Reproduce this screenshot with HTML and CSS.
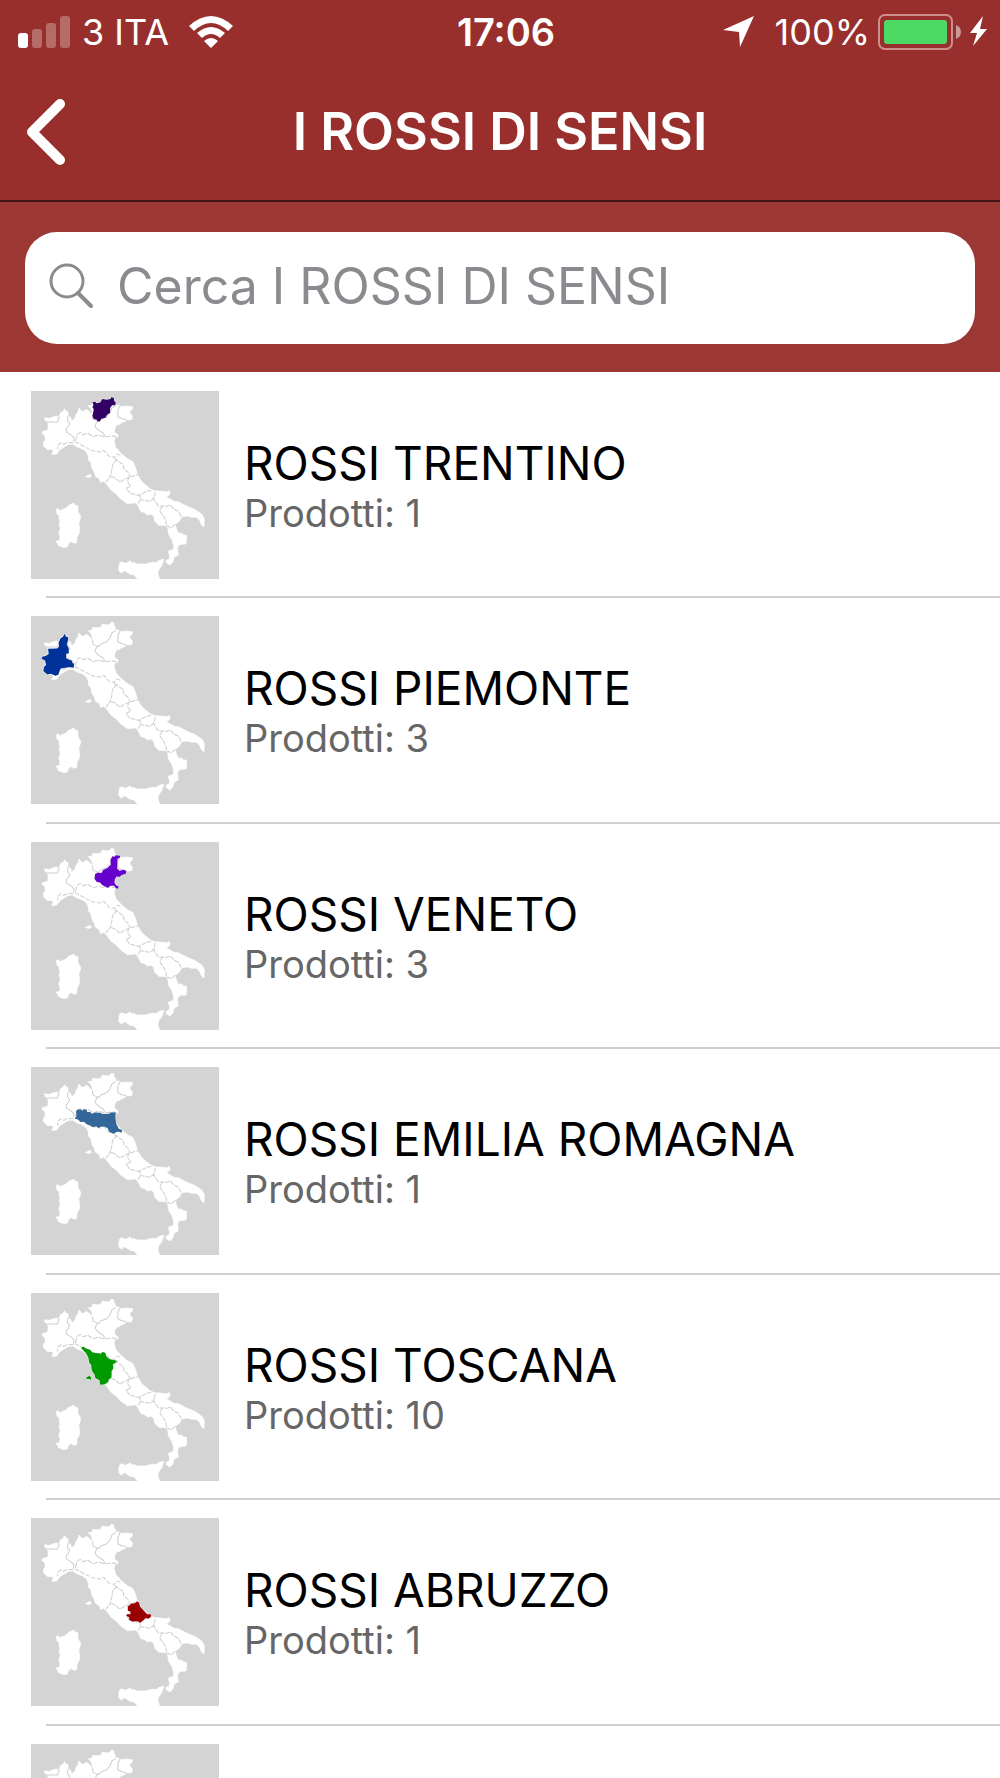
FILE: index.html
```html
<!DOCTYPE html>
<html lang="it">
<head>
    <meta charset="UTF-8">
    <meta name="viewport" content="width=device-width, initial-scale=1.0">
    <title>I ROSSI DI SENSI</title>
    <link rel="stylesheet" href="styles.css">
</head>
<body>
    <!-- Shared map of Italy -->
    <svg class="defs" aria-hidden="true">
        <symbol id="italia" viewBox="33 33 563 563">
            <path fill="#d4d4d4" d="M33 33h563v563H33z"/>
            <g fill="#fff" stroke="#fff" stroke-width="2" stroke-linejoin="round">
                <path d="M73 113L88 115L97 111L110 108L116 112L122 97L128 95L134 86L138 94L144 94L144 107L152 112L155 123L165 114L167 104L173 97L177 84L184 93L191 94L198 88L206 92L213 101L217 98L213 86L204 77L217 75L217 67L228 68L240 68L247 57L262 60L271 57L273 52L281 53L282 62L287 70L285 74L300 76L304 80L318 78L337 80L336 88L329 92L330 101L337 107L335 118L325 120L318 118L315 124L303 129L297 134L290 134L284 145L283 156L294 165L293 171L284 172L282 184L287 202L303 220L322 236L338 244L346 262L352 284L365 305L390 326L404 332L425 333L440 335L446 331L450 336L446 345L438 350L463 364L475 365L500 378L524 388L545 402L552 415L551 440L543 433L538 420L528 411L514 411L500 407L484 410L478 422L465 432L468 445L473 458L485 459L490 464L499 465L499 478L497 491L478 493L472 502L474 524L462 530L458 545L449 554L437 546L439 539L447 536L448 526L444 513L460 507L460 495L455 478L445 462L442 440L436 436L416 435L404 424L400 407L390 401L384 405L371 396L363 395L352 374L344 368L322 371L300 355L290 343L273 330L258 310L250 303L241 307L238 296L226 288L223 277L216 265L212 247L205 240L205 228L198 214L186 206L170 200L158 192L145 193L125 205L118 210L110 222L95 223L100 213L95 208L82 208L70 197L71 185L76 180L74 166L66 160L68 154L78 152L84 148L84 130L77 124Z"/>
                <path d="M158 370L163 370L165 376L173 376L174 395L182 408L179 422L176 427L178 442L178 458L171 470L170 487L162 489L153 484L145 490L142 500L130 502L115 496L112 487L108 485L111 481L118 482L120 470L116 458L121 445L117 433L120 425L117 415L118 407L111 402L109 388L113 385L120 391L137 384L145 376Z"/>
                <path d="M296 562L298 549L304 544L315 549L325 545L329 541L334 547L346 548L352 551L375 551L395 546L410 546L416 540L431 537L425 555L415 570L413 580L418 596H352L342 584L330 582L315 572L308 573L305 579L296 571Z"/>
                <path d="M196 289L203 286L210 282L214 289L205 292Z"/>
            </g>
            <g fill="none" stroke="#cdcdcd" stroke-width="3" stroke-linejoin="round">
                <path d="M75 126L112 126L118 110M144 107L142 122L149 130L144 140L138 146L140 157L154 165L162 174L160 184"/>
                <path stroke-dasharray="15 4" d="M160 187L139 188L132 193L122 188L114 195L112 208M166 182L171 163L180 157L189 164L202 159L219 170L236 165L252 170L283 168L293 170"/>
                <path stroke-dasharray="13 5" d="M165 185L188 197L214 211L240 216L251 211L260 220L266 228L282 232L291 222L302 226"/>
                <path d="M217 103L219 118L236 124L229 126L225 140L236 151L248 158L255 169M236 124L243 116L260 110L270 98L275 84L286 76M300 76L293 92L293 110L305 116L318 118"/>
                <path stroke-dasharray="14 3" d="M291 237L277 253L275 270L270 290L257 306M282 235L310 254L311 266L323 276L330 290M273 289L284 293L299 306L314 297L330 290L353 284M326 290L322 305L332 318L318 324L328 338L357 346L360 341M393 330L380 333L359 344L361 358L352 373M359 358L389 363L401 355L406 332M399 351L405 364L414 377L441 378L450 374L462 387L474 393L483 409M427 378L418 391L428 405L437 421L439 436L453 443L465 432"/>
            </g>
        </symbol>
    </svg>

    <header class="header">
        <div class="status">
            <div class="status-left">
                <svg width="52" height="32" viewBox="0 0 52 32" aria-hidden="true">
                    <rect x="0" y="17" width="10" height="15" rx="3" fill="#fff"/>
                    <g fill="#b56b68">
                        <rect x="14" y="13" width="10" height="19" rx="3"/>
                        <rect x="28" y="7" width="10" height="25" rx="3"/>
                        <rect x="42" y="0" width="10" height="32" rx="3"/>
                    </g>
                </svg>
                <span>3 ITA</span>
                <svg class="wifi" width="44" height="32" viewBox="0 0 44 32" aria-hidden="true">
                    <path fill="#fff" d="M0 10Q22-10 44 10L39 15Q22-1 5 15ZM8 17Q22 5 36 17L31 22Q22 14 13 22ZM15 25Q22 19 29 25L22 32Z"/>
                </svg>
            </div>
            <strong class="time">17:06</strong>
            <div class="status-right">
                <svg class="location" width="32" height="32" viewBox="0 0 32 32" aria-hidden="true">
                    <path fill="#fff" d="M31 0L17 31L16 16L0 14Z"/>
                </svg>
                <span>100%</span>
                <svg width="110" height="36" viewBox="0 0 110 36" aria-hidden="true">
                    <rect x="1" y="1" width="73" height="34" rx="6" fill="none" stroke="#cb8f8d" stroke-width="2"/>
                    <rect x="6" y="6" width="63" height="24" rx="3" fill="#4cd964"/>
                    <path fill="#cb9997" d="M78 11Q83 13 83 18Q83 23 78 25Z"/>
                    <path fill="#fff" d="M105 2L92 19H99L95 32L109 15H102Z"/>
                </svg>
            </div>
        </div>
        <div class="navbar">
            <button class="back" type="button" aria-label="Indietro">
                <svg width="40" height="68" viewBox="0 0 40 68" aria-hidden="true">
                    <path d="M34 6L6 34L34 62" fill="none" stroke="#fff" stroke-width="10" stroke-linecap="round" stroke-linejoin="round"/>
                </svg>
            </button>
            <h1>I ROSSI DI SENSI</h1>
        </div>
    </header>

    <form class="search">
        <label class="search-box">
            <svg width="46" height="46" viewBox="0 0 46 46" aria-hidden="true">
                <circle cx="18" cy="18" r="16" fill="none" stroke="#8a8a8f" stroke-width="3"/>
                <path d="M29 30L42 43" stroke="#8a8a8f" stroke-width="4" stroke-linecap="round"/>
            </svg>
            <input type="search" name="q" placeholder="Cerca I ROSSI DI SENSI" aria-label="Cerca I ROSSI DI SENSI">
        </label>
    </form>

    <!-- Regions -->
    <ul class="list">
        <li>
            <a href="#trentino">
                <svg class="thumb" viewBox="33 33 563 563" aria-hidden="true">
                    <use href="#italia" x="33" y="33" width="563" height="563"/>
                    <path fill="#330066" d="M217 66L226 66L230 70L241 67L246 57L260 59L271 57L273 52L281 53L282 62L287 68L285 76L276 76L270 84L270 98L261 104L256 113L244 116L239 124L233 124L230 119L221 117L217 108L221 88L217 82L220 74Z"/>
                </svg>
                <div class="info">
                    <h2>ROSSI TRENTINO</h2>
                    <p>Prodotti: 1</p>
                </div>
            </a>
        </li>
        <li>
            <a href="#piemonte">
                <svg class="thumb" viewBox="33 33 563 563" aria-hidden="true">
                    <use href="#italia" x="33" y="33" width="563" height="563"/>
                    <path fill="#003399" d="M134 86L138 95L144 96L144 105L140 118L146 130L146 145L138 146L138 159L147 164L155 166L157 174L162 176L161 188L150 186L122 190L119 197L115 209L106 212L92 206L82 208L70 198L72 185L78 180L75 166L65 161L67 155L78 152L86 147L84 131L111 130L117 124L116 112L122 99L128 96Z"/>
                </svg>
                <div class="info">
                    <h2>ROSSI PIEMONTE</h2>
                    <p>Prodotti: 3</p>
                </div>
            </a>
        </li>
        <li>
            <a href="#veneto">
                <svg class="thumb" viewBox="33 33 563 563" aria-hidden="true">
                    <use href="#italia" x="33" y="33" width="563" height="563"/>
                    <path fill="#6600cc" d="M277 76L284 77L286 73L299 74L300 79L292 84L291 112L298 119L311 116L318 120L317 128L306 131L298 137L289 136L284 145L283 156L290 164L295 165L294 172L288 172L282 164L271 164L263 170L246 162L240 154L230 153L223 143L225 129L234 125L244 126L249 117L262 111L272 101L271 86Z"/>
                </svg>
                <div class="info">
                    <h2>ROSSI VENETO</h2>
                    <p>Prodotti: 3</p>
                </div>
            </a>
        </li>
        <li>
            <a href="#emilia-romagna">
                <svg class="thumb" viewBox="33 33 563 563" aria-hidden="true">
                    <use href="#italia" x="33" y="33" width="563" height="563"/>
                    <path fill="#336699" d="M168 164L174 160L184 160L187 165L191 159L199 161L202 168L210 168L216 173L226 169L241 170L247 174L268 173L270 169L287 169L285 180L288 203L296 218L306 222L304 230L294 226L286 229L280 233L268 228L262 216L252 211L242 212L236 216L229 211L217 213L210 208L199 204L192 197L181 198L174 190L164 187L169 181Z"/>
                </svg>
                <div class="info">
                    <h2>ROSSI EMILIA ROMAGNA</h2>
                    <p>Prodotti: 1</p>
                </div>
            </a>
        </li>
        <li>
            <a href="#toscana">
                <svg class="thumb" viewBox="33 33 563 563" aria-hidden="true">
                    <use href="#italia" x="33" y="33" width="563" height="563"/>
                    <path fill="#009900" d="M183 198L189 193L198 199L210 203L217 211L243 215L246 210L255 212L259 223L267 231L292 237L278 247L280 258L274 267L274 286L266 291L265 298L254 306L240 308L238 294L226 288L223 277L215 265L213 248L207 242L205 228L199 215ZM195 289L208 281L214 287L212 292Z"/>
                </svg>
                <div class="info">
                    <h2>ROSSI TOSCANA</h2>
                    <p>Prodotti: 10</p>
                </div>
            </a>
        </li>
        <li>
            <a href="#abruzzo">
                <svg class="thumb" viewBox="33 33 563 563" aria-hidden="true">
                    <use href="#italia" x="33" y="33" width="563" height="563"/>
                    <path fill="#990000" d="M323 299L333 290L344 288L349 283L356 286L360 299L375 315L381 321L391 321L393 327L386 334L375 333L368 341L360 347L353 342L335 343L326 337L328 331L318 326L321 321L331 321L331 313L323 311Z"/>
                </svg>
                <div class="info">
                    <h2>ROSSI ABRUZZO</h2>
                    <p>Prodotti: 1</p>
                </div>
            </a>
        </li>
        <li>
            <a href="#altre" aria-label="Altre regioni">
                <svg class="thumb" viewBox="33 33 563 563" aria-hidden="true">
                    <use href="#italia" x="33" y="33" width="563" height="563"/>
                </svg>
            </a>
        </li>
    </ul>
</body>
</html>
```
FILE: styles.css
```css
* {
    box-sizing: border-box;
}
html {
    scrollbar-width: none;
}
body {
    font-family: Inter, "Liberation Sans", sans-serif;
    margin: 0;
    background-color: #ffffff;
    color: #000000;
}
h1, h2, p, ul {
    margin: 0;
    padding: 0;
}
svg {
    display: block;
    flex-shrink: 0;
}
.defs {
    position: absolute;
    width: 0;
    height: 0;
}
/* Header */
.header {
    background-color: #982f2c;
    border-bottom: 2px solid #431414;
    color: #ffffff;
}
.status {
    display: grid;
    grid-template-columns: 1fr auto 1fr;
    align-items: center;
    height: 64px;
    padding: 0 12px 0 18px;
    font-size: 36px;
    line-height: 44px;
}
.status-left, .status-right {
    display: flex;
    align-items: center;
    gap: 12px;
}
.status-right {
    justify-content: flex-end;
    gap: 8px;
}
.wifi {
    margin-left: 8px;
}
.location {
    margin-right: 12px;
}
.time {
    padding-left: 6px;
    font-size: 38px;
    font-weight: 600;
}
.navbar {
    display: grid;
    grid-template-columns: 80px 1fr 80px;
    align-items: center;
    height: 136px;
}
.back {
    padding: 0 0 0 26px;
    border: none;
    background: none;
    cursor: pointer;
}
.navbar h1 {
    font-size: 52px;
    font-weight: 600;
    line-height: 64px;
    text-align: center;
}
/* Search */
.search {
    padding: 30px 25px 28px;
    background-color: #9c3834;
}
.search-box {
    display: flex;
    align-items: center;
    gap: 22px;
    height: 112px;
    padding: 0 24px 4px;
    border-radius: 32px;
    background-color: #ffffff;
}
.search-box input {
    flex: 1;
    min-width: 0;
    padding: 0;
    border: none;
    outline: none;
    background: none;
    font-family: inherit;
    font-size: 50px;
    line-height: 64px;
}
.search-box input::placeholder {
    color: #8a8a8f;
    opacity: 1;
}
/* List */
.list {
    padding-top: 1px;
    list-style: none;
}
.list li {
    margin-left: 46px;
    padding: 18px 0 17px;
    border-bottom: 2px solid #cfcfd1;
}
.list li:nth-child(even) {
    padding-bottom: 18px;
}
.list a {
    display: flex;
    align-items: center;
    gap: 25px;
    color: inherit;
    text-decoration: none;
}
.thumb {
    width: 188px;
    height: 188px;
    margin-left: -15px;
}
.info {
    padding-top: 2px;
}
.info h2 {
    font-size: 46px;
    font-weight: 400;
    line-height: 54px;
}
.info p {
    color: #666666;
    font-size: 38px;
    line-height: 46px;
}
```
